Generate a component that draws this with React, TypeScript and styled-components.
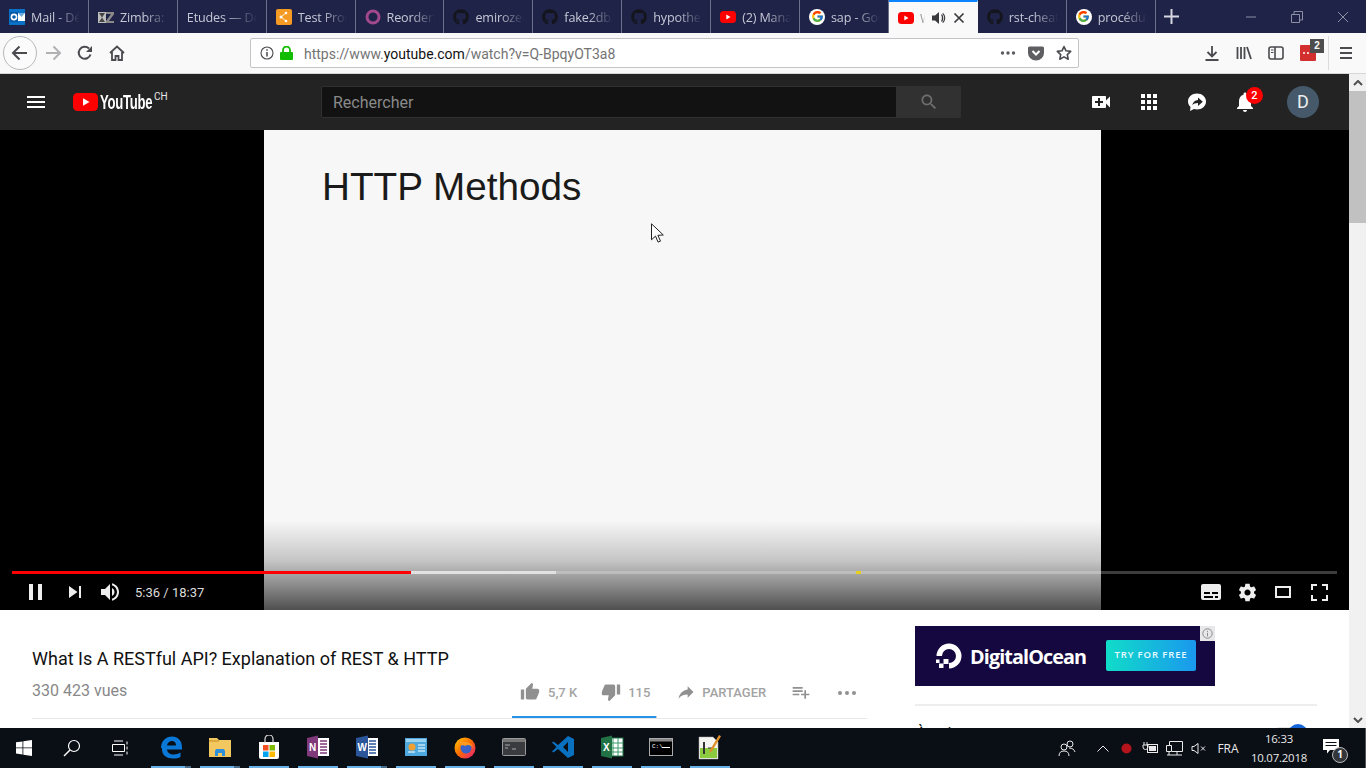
import React from "react";
import styled, { createGlobalStyle } from "styled-components";
import { FaGithub } from "react-icons/fa";
import { FcGoogle } from "react-icons/fc";

const Global = createGlobalStyle`
  html, body { margin: 0; padding: 0; height: 100%; overflow: hidden; background: #fff; }
  * { box-sizing: border-box; }
  body { font-family: Roboto, "Liberation Sans", sans-serif; }
`;

const Shell = styled.div`
  width: 1366px; height: 768px; display: flex; flex-direction: column; overflow: hidden;
`;

/* ---------- generic drawing ---------- */
const Svg = styled.svg<{ $color?: string; $ml?: number }>`
  display: block; flex: none; fill: ${(p) => p.$color || "currentColor"};
  margin-left: ${(p) => p.$ml ?? 0}px;
`;
const Ico = ({ d, size = 24, box = "0 0 24 24", color }: { d: string; size?: number; box?: string; color?: string }) => (
  <Svg width={size} height={size} viewBox={box} $color={color}><path d={d} /></Svg>
);

/* ---------- Firefox tab strip ---------- */
const TabStrip = styled.div`
  height: 33px; background: #1f2347; display: flex; flex: none;
`;
const Tab = styled.div<{ $active?: boolean }>`
  width: 88.9px; height: 33px; flex: none; display: flex; align-items: center; gap: 6px;
  padding: 0 ${(p) => (p.$active ? 12 : 8)}px 0 9px; position: relative; overflow: hidden;
  background: ${(p) => (p.$active ? "#f9f9fa" : "transparent")};
  border-right: 1px solid ${(p) => (p.$active ? "transparent" : "#6d708a")};
  border-top: ${(p) => (p.$active ? "2px solid #0a84ff" : "0")};
`;
const TabLabel = styled.span<{ $active?: boolean }>`
  font: 12.6px "Open Sans", "Liberation Sans", sans-serif; letter-spacing: -.15px; white-space: nowrap; overflow: hidden; flex: 1; min-width: 0;
  padding-top: 1px;
  color: ${(p) => (p.$active ? "#999" : "#c6c8d6")};
  -webkit-mask-image: linear-gradient(90deg, #000 50%, transparent 100%);
  mask-image: linear-gradient(90deg, #000 50%, transparent 100%);
`;
const Favicon = styled.span`
  width: 16px; height: 16px; flex: none; display: block;
`;
const GoogleDisc = styled.span`
  width: 16px; height: 16px; flex: none; border-radius: 50%; background: #fff;
  display: flex; align-items: center; justify-content: center;
`;
const NewTab = styled.div`
  width: 32px; display: flex; align-items: center; justify-content: center; color: #d6d7e0;
`;
const WinButtons = styled.div`
  margin-left: auto; display: flex; color: #8e90a6; height: 33px;
`;
const WinBtn = styled.div`
  width: 46px; display: flex; align-items: center; justify-content: center;
`;

const YtFavicon = () => (
  <Favicon><svg width="16" height="16" viewBox="0 0 16 16"><rect x="0" y="2" width="16" height="12" rx="3.5" fill="#f00" /><path d="M6.3 5.6 10.5 8 6.3 10.4z" fill="#fff" /></svg></Favicon>
);
const HubFavicon = () => (
  <Favicon><FaGithub size={16} color="#14151c" /></Favicon>
);
const GoogleFavicon = () => (
  <GoogleDisc><FcGoogle size={13} /></GoogleDisc>
);

/* ---------- Firefox navigation bar ---------- */
const NavBar = styled.div`
  height: 41px; flex: none; background: #f9f9fa; border-bottom: 1px solid #d7d7db;
  display: flex; align-items: center; color: #4a4a4f; padding-left: 3px;
`;
const BackCircle = styled.div`
  width: 34px; height: 34px; border-radius: 50%; border: 1px solid #b8b8bb; background: #fbfbfc;
  display: flex; align-items: center; justify-content: center; flex: none;
`;
const NavBtn = styled.div<{ $w?: number; $dim?: boolean }>`
  width: ${(p) => p.$w || 32}px; height: 32px; flex: none; display: flex; align-items: center; justify-content: center;
  color: ${(p) => (p.$dim ? "#b1b1b3" : "inherit")}; position: relative;
`;
const UrlBar = styled.div`
  width: 829px; height: 30px; margin-left: 117px; flex: none; background: #fff; border: 1px solid #c4c4c6; border-radius: 2px;
  display: flex; align-items: center; padding-left: 9px;
`;
const UrlText = styled.span`
  font: 14px Roboto, "Liberation Sans", sans-serif; color: #737373; margin: 1px 0 0 11px; white-space: nowrap; flex: 1;
  strong { font-weight: 400; color: #111; }
`;
const UrlIcons = styled.div`
  display: flex; align-items: center; gap: 8px; padding-right: 6px;
`;
const ExtBadge = styled.span`
  position: absolute; top: 2px; right: 0px; width: 14px; height: 14px; background: #4d4d4d; color: #fff;
  font: 700 10px/14px "Liberation Sans", sans-serif; text-align: center;
`;
const ToolGroup = styled.div`
  margin-left: 117px; display: flex; align-items: center;
`;
const ToolDivider = styled.div`
  width: 1px; height: 34px; background: #dcdcde; margin-left: 4px; margin-right: 2px;
`;

/* ---------- page ---------- */
const Viewport = styled.div`
  flex: 1; display: flex; min-height: 0;
`;
const Page = styled.div`
  flex: 1; min-width: 0; display: flex; flex-direction: column; overflow: hidden; background: #fff;
`;
const Scrollbar = styled.div`
  width: 17px; flex: none; background: #f1f1f1; display: flex; flex-direction: column; align-items: center; color: #505050;
`;
const ScrollArrow = styled.div`
  height: 17px; flex: none; display: flex; align-items: center; justify-content: center; width: 100%;
`;
const ScrollThumb = styled.div`
  width: 17px; height: 132px; background: #c1c1c1; flex: none;
`;
const ScrollSpacer = styled.div`
  flex: 1;
`;

/* ---------- YouTube masthead ---------- */
const Masthead = styled.header`
  height: 56px; flex: none; background: #232323; display: flex; align-items: center; color: #fff;
`;
const Burger = styled.div`
  width: 18px; height: 12px; margin-left: 27px; flex: none;
  border-top: 2px solid #fff; border-bottom: 2px solid #fff; position: relative;
  &::after { content: ""; position: absolute; left: 0; right: 0; top: 3px; height: 2px; background: #fff; }
`;
const Logo = styled.div`
  margin-left: 28px; width: 95px; display: flex; align-items: center; flex: none; position: relative;
`;
const LogoWord = styled.span`
  font: 700 20px "Liberation Sans", sans-serif; letter-spacing: -0.4px; margin-left: 2px; color: #fff; width: 52px;
  transform: scaleX(.655); transform-origin: left center; white-space: nowrap; display: block;
`;
const LogoRegion = styled.span`
  position: absolute; left: 81px; top: 0; font: 10px Roboto, sans-serif; color: #e8e8e8;
`;
const Search = styled.div`
  margin-left: 153px; width: 640px; height: 32px; display: flex; flex: none;
`;
const SearchInput = styled.div`
  width: 575px; height: 32px; background: #121212; border: 1px solid #303030; border-right: 0; border-radius: 2px 0 0 2px;
  font: 16px/32px Roboto, sans-serif; color: #8a8a8a; padding-left: 11px;
`;
const SearchBtn = styled.div`
  width: 65px; height: 32px; background: #313131; border: 1px solid #303030; display: flex; align-items: center; justify-content: center; color: #6f6f6f;
`;
const HeadIcons = styled.div`
  margin-left: 128px; display: flex; align-items: center; gap: 24px;
`;
const HeadIcon = styled.div`
  width: 24px; height: 24px; position: relative; flex: none;
`;
const Count = styled.span`
  position: absolute; left: 13px; top: -3px; width: 17px; height: 17px; border-radius: 50%; background: #f00; color: #fff;
  font: 500 11px/17px Roboto, sans-serif; text-align: center;
`;
const Avatar = styled.div`
  width: 32px; height: 32px; border-radius: 50%; background: #45596a; color: #eee; margin-left: 30px; flex: none;
  font: 18px/32px Roboto, sans-serif; text-align: center;
`;

/* ---------- player ---------- */
const Player = styled.section`
  height: 480px; flex: none; background: #000; position: relative; overflow: hidden;
`;
const Slide = styled.div`
  width: 837px; height: 480px; margin-left: 264px; background: #f7f7f7; padding: 32px 0 0 58px;
`;
const SlideTitle = styled.h2`
  margin: 0; font: 400 38.7px/50px "Liberation Sans", sans-serif; color: #1a1a1a;
`;
const Pointer = styled.svg`
  position: absolute; left: 651px; top: 93px;
`;
const Shade = styled.div`
  position: absolute; left: 0; right: 0; bottom: 0; height: 90px;
  background: linear-gradient(180deg, rgba(0,0,0,0) 0%, rgba(0,0,0,.2) 45%, rgba(0,0,0,.68) 100%);
`;
const Timeline = styled.div`
  position: absolute; left: 12px; right: 12px; top: 441px; height: 3px; background: rgba(255,255,255,.24); display: flex;
`;
const Played = styled.div`
  width: 399px; background: #f00;
`;
const Buffered = styled.div`
  width: 145px; background: rgba(255,255,255,.55);
`;
const Marker = styled.div`
  position: absolute; left: 844px; top: 0; width: 5px; height: 3px; background: #e8d020;
`;
const Controls = styled.div`
  position: absolute; left: 17px; right: 12px; top: 444px; height: 36px; display: flex; align-items: center; color: #eee;
`;
const Ctl = styled.div<{ $ml?: number }>`
  width: 36px; height: 36px; flex: none; display: flex; align-items: center; justify-content: center;
  margin-left: ${(p) => p.$ml ?? 0}px;
`;
const TimeText = styled.span`
  font: 13px Roboto, sans-serif; color: #ddd; margin-left: 6px; white-space: nowrap;
`;
const CtlRight = styled.div`
  margin-left: auto; display: flex;
`;

/* ---------- below the player ---------- */
const Below = styled.div`
  flex: 1; display: flex; padding: 16px 0 0 32px; min-height: 0; overflow: hidden;
`;
const Primary = styled.div`
  width: 835px; flex: none; padding-top: 21px;
`;
const VideoTitle = styled.h1`
  margin: 0; font: 400 18px/24px Roboto, sans-serif; color: #111;
`;
const MetaRow = styled.div`
  display: flex; height: 48px; align-items: flex-start; border-bottom: 1px solid #e8e8e8; position: relative;
`;
const Views = styled.span`
  font: 16px/24px Roboto, sans-serif; color: #888; margin-top: 8px; width: 488px; flex: none; white-space: nowrap;
`;
const Actions = styled.div`
  display: flex; align-items: center; color: #909090; height: 24px; margin-top: 9px;
`;
const Act = styled.div<{ $gap?: number; $mr?: number }>`
  display: flex; align-items: center; gap: ${(p) => p.$gap ?? 8}px; font: 500 13px Roboto, sans-serif; color: #a3a3a3;
  margin-right: ${(p) => p.$mr ?? 24}px; white-space: nowrap;
`;
const Sentiment = styled.div`
  position: absolute; left: 480px; bottom: 0; width: 145px; height: 2px; background: #ccc; z-index: 1;
`;
const SentimentFill = styled.div`
  height: 100%; width: 99%; background: #2793e6;
`;
const Secondary = styled.aside`
  width: 402px; flex: none; margin-left: 48px;
`;
const Ad = styled.div`
  width: 300px; height: 60px; background: #150840; display: flex; align-items: center; position: relative; padding-left: 20px;
`;
const AdWord = styled.span`
  font: 700 19.8px "Open Sans", sans-serif; color: #fff; margin-left: 7px; letter-spacing: -.9px; white-space: nowrap;
`;
const AdCta = styled.div`
  position: absolute; left: 191px; top: 14px; width: 90px; height: 31px; border-radius: 2px;
  background: linear-gradient(90deg, #10dcc8, #1a98ee); color: #e8fbff; font: 600 9.5px/30px "Open Sans", sans-serif; letter-spacing: .9px; text-align: center;
`;
const AdInfo = styled.div`
  position: absolute; right: 0; top: 0; width: 15px; height: 15px; background: #e8e8ea; display: flex; align-items: center; justify-content: center; color: #8a8a8a;
`;
const SideDivider = styled.div`
  height: 2px; background: #eee; margin-top: 18px;
`;
const UpNext = styled.div`
  display: flex; justify-content: space-between; align-items: flex-start; margin-top: 17px; height: 24px;
`;
const UpNextLabel = styled.span`
  font: 16px/24px Roboto, sans-serif; color: #111; margin-top: -1px; margin-left: 1px;
`;
const Toggle = styled.div`
  width: 34px; height: 14px; border-radius: 7px; background: #e6e6e6; position: relative; margin: 4px 10px 0 0;
  &::after { content: ""; position: absolute; right: -1px; top: -3px; width: 20px; height: 20px; border-radius: 50%; background: #1565d8; }
`;

/* ---------- Windows taskbar ---------- */
const Taskbar = styled.footer`
  height: 40px; flex: none; background: #0a0e15; display: flex; align-items: center; color: #fff;
`;
const SysBtn = styled.div`
  width: 48px; height: 40px; flex: none; display: flex; align-items: center; justify-content: center;
`;
const Pinned = styled.div`
  display: flex; margin-left: 7px;
`;
const Pin = styled.div<{ $stack?: boolean }>`
  width: 49px; height: 40px; position: relative; display: flex; align-items: center; justify-content: center; padding: 0 9px 2px 0;
  &::after {
    content: ""; position: absolute; left: 0; bottom: 0; width: 40px; height: 2px; background: ${(p) => p.$stack ? "linear-gradient(90deg,#6ab1e8 85%,#4a6d8c 85%)" : "#6ab1e8"};
  }
`;
const Tray = styled.div`
  margin-left: auto; display: flex; align-items: center; height: 40px; color: #eaeaea;
`;
const TrayIcon = styled.div<{ $w: number; $ml?: number }>`
  width: ${(p) => p.$w}px; display: flex; align-items: center; justify-content: center; flex: none;
  margin-left: ${(p) => p.$ml ?? 0}px;
`;
const Lang = styled.span`
  font: 12px "Open Sans", sans-serif; width: 32px; text-align: center; margin: 0 4px 0 2px;
`;
const Clock = styled.div`
  width: 62px; margin-right: 8px; text-align: center; font: 11.4px/19px "Open Sans", sans-serif; letter-spacing: -.2px; color: #e8e8e8; white-space: nowrap;
`;
const Notif = styled.div`
  width: 48px; height: 40px; position: relative; display: flex; align-items: center; justify-content: center;
  border-right: 1px solid #555; padding: 0 22px 4px 0;
`;
const NotifCount = styled.span`
  position: absolute; left: 14px; top: 19px; width: 16px; height: 16px; border-radius: 50%; border: 1.5px solid #bbb; background: #33363b; color: #fff;
  font: 700 10px/13px "Open Sans", sans-serif; text-align: center;
`;

/* ---------- icon paths ---------- */
const P = {
  video: "M17 10.5V7c0-.55-.45-1-1-1H4c-.55 0-1 .45-1 1v10c0 .55.45 1 1 1h12c.55 0 1-.45 1-1v-3.5l4 4v-11l-4 4zM14 13h-3v3H9v-3H6v-2h3V8h2v3h3v2z",
  apps: "M4 8h4V4H4v4zm6 12h4v-4h-4v4zm-6 0h4v-4H4v4zm0-6h4v-4H4v4zm6 0h4v-4h-4v4zm6-10v4h4V4h-4zm-6 4h4V4h-4v4zm6 6h4v-4h-4v4zm0 6h4v-4h-4v4z",
  bell: "M12 22c1.1 0 2-.9 2-2h-4c0 1.1.89 2 2 2zm6-6v-5c0-3.07-1.64-5.64-4.5-6.32V4c0-.83-.67-1.5-1.5-1.5s-1.5.67-1.5 1.5v.68C7.63 5.36 6 7.92 6 11v5l-2 2v1h16v-1l-2-2z",
  search: "M15.5 14h-.79l-.28-.27C15.41 12.59 16 11.11 16 9.5 16 5.91 13.09 3 9.5 3S3 5.91 3 9.5 5.91 16 9.5 16c1.61 0 3.09-.59 4.23-1.57l.27.28v.79l5 4.99L20.49 19l-4.99-5zm-6 0C7.01 14 5 11.99 5 9.5S7.01 5 9.5 5 14 7.01 14 9.5 11.99 14 9.5 14z",
  up: "M1 21h4V9H1v12zm22-11c0-1.1-.9-2-2-2h-6.31l.95-4.57.03-.32c0-.41-.17-.79-.44-1.06L14.17 1 7.59 7.59C7.22 7.95 7 8.45 7 9v10c0 1.1.9 2 2 2h9c.83 0 1.54-.5 1.84-1.22l3.02-7.05c.09-.23.14-.47.14-.73v-2z",
  down: "M15 3H6c-.83 0-1.54.5-1.84 1.22l-3.02 7.05c-.09.23-.14.47-.14.73v2c0 1.1.9 2 2 2h6.31l-.95 4.57-.03.32c0 .41.17.79.44 1.06L9.83 23l6.59-6.59c.36-.36.58-.86.58-1.41V5c0-1.1-.9-2-2-2zm4 0v12h4V3h-4z",
  share: "M14 9V5l7 7-7 7v-4.1c-5 0-8.5 1.6-11 5.1 1-5 4-10 11-11z",
  add: "M14 10H2v2h12v-2zm0-4H2v2h12V6zm4 8v-4h-2v4h-4v2h4v4h2v-4h4v-2h-4zM2 16h8v-2H2v2z",
  gear: "M19.43 12.98c.04-.32.07-.64.07-.98s-.03-.66-.07-.98l2.11-1.65c.19-.15.24-.42.12-.64l-2-3.46c-.12-.22-.39-.3-.61-.22l-2.49 1c-.52-.4-1.08-.73-1.69-.98l-.38-2.65C14.46 2.18 14.25 2 14 2h-4c-.25 0-.46.18-.49.42l-.38 2.65c-.61.25-1.17.59-1.69.98l-2.49-1c-.23-.09-.49 0-.61.22l-2 3.46c-.13.22-.07.49.12.64l2.11 1.65c-.04.32-.07.65-.07.98s.03.66.07.98l-2.11 1.65c-.19.15-.24.42-.12.64l2 3.46c.12.22.39.3.61.22l2.49-1c.52.4 1.08.73 1.69.98l.38 2.65c.03.24.24.42.49.42h4c.25 0 .46-.18.49-.42l.38-2.65c.61-.25 1.17-.59 1.69-.98l2.49 1c.23.09.49 0 .61-.22l2-3.46c.12-.22.07-.49-.12-.64l-2.11-1.65zM12 15.5c-1.93 0-3.5-1.57-3.5-3.5s1.57-3.5 3.5-3.5 3.5 1.57 3.5 3.5-1.57 3.5-3.5 3.5z",
  pause: "M12 26h4V10h-4zM21 26h4V10h-4z",
  next: "M12 24l8.5-6L12 12v12zM22 12v12h2V12h-2z",
  vol: "M8 21h4l5 5V10l-5 5H8v6zM19 14v8c1.48-.68 2.5-2.23 2.5-4 0-1.74-1.02-3.26-2.5-4zM19 11.29c2.89.86 5 3.54 5 6.71s-2.11 5.85-5 6.71v2.06c4.01-.91 7-4.49 7-8.77s-2.99-7.86-7-8.77v2.06z",
};

const tabs = [
  { label: "Mail - Dé", icon: <Favicon><svg width="16" height="16" viewBox="0 0 16 16"><rect width="16" height="16" fill="#0a72c6" /><rect x="9" y="4" width="7" height="8" fill="#fff" /><path d="M9 4h7L12.5 8z" fill="#0a72c6" opacity=".6" /><rect x="1" y="3" width="8" height="10" fill="#0358a7" /><circle cx="5" cy="8" r="2.6" fill="none" stroke="#fff" strokeWidth="1.6" /></svg></Favicon> },
  { label: "Zimbra: S", icon: <Favicon><svg width="16" height="16" viewBox="0 0 16 16"><rect y="3" width="8" height="11" fill="#bdbdbd" /><path d="M1 4h6L4 8.5 7 13H1l3-4.500z" fill="#444" /><path d="M8 3h8v2.200l-5 6.800h5v2H8v-2l5-7H8z" fill="#8a8a8a" /></svg></Favicon> },
  { label: "Etudes — Do", icon: null },
  { label: "Test Proc", icon: <Favicon><svg width="16" height="16" viewBox="0 0 16 16"><rect width="16" height="16" rx="2" fill="#f59b23" /><circle cx="5" cy="8" r="1.500" fill="#fff" /><circle cx="10" cy="4" r="1.300" fill="#fff" /><circle cx="10" cy="12" r="1.300" fill="#fff" /><path d="M5 8l5-4M5 8l5 4" stroke="#fff" strokeWidth=".8" /></svg></Favicon> },
  { label: "Reorderin", icon: <Favicon><svg width="16" height="16" viewBox="0 0 16 16"><circle cx="8" cy="8" r="6" fill="none" stroke="#a2488f" strokeWidth="3" /></svg></Favicon> },
  { label: "emirozer", icon: <HubFavicon /> },
  { label: "fake2db/", icon: <HubFavicon /> },
  { label: "hypothes", icon: <HubFavicon /> },
  { label: "(2) Mana", icon: <YtFavicon /> },
  { label: "sap - Goo", icon: <GoogleFavicon /> },
];
const tabsAfter = [
  { label: "rst-cheat", icon: <HubFavicon /> },
  { label: "procédur", icon: <GoogleFavicon /> },
];

const pins: { icon: React.ReactNode; stack?: boolean }[] = [
  { stack: true, icon: <svg width="24" height="24" viewBox="0 0 24 24"><path d="M2 13C2 6 7 1.500 13 1.500c6 0 10 4 10 11v2H8c.5 3.500 3 5 6.500 5 2.500 0 5-.7 7-2v4.500c-2 1-4.500 1.500-7.500 1.500-6 0-11-3-11-9 0-.5 0-1 0-1.500zM8 10.500h9C17 7.500 15.500 6 13 6s-4.500 1.500-5 4.500z" fill="#0a78d7" /></svg> },
  { stack: true, icon: <svg width="24" height="22" viewBox="0 0 24 22"><path d="M1 2h8l2 2h12v17H1z" fill="#f3c860" /><rect x="1" y="4" width="10" height="2" fill="#d9a93e" /><path d="M7 20v-5l1-2h8l1 2v5h-3v-3h-4v3z" fill="#2e90d8" /></svg> },
  { icon: <svg width="24" height="24" viewBox="0 0 24 24"><path d="M2 7h20v15a2 2 0 0 1-2 2H4a2 2 0 0 1-2-2z" fill="#fff" /><path d="M8 8V4a4 4 0 0 1 8 0v4" fill="none" stroke="#ddd" strokeWidth="1.200" /><rect x="6" y="10" width="5.500" height="5.500" fill="#f25022" /><rect x="12.500" y="10" width="5.500" height="5.500" fill="#7fba00" /><rect x="6" y="16.500" width="5.500" height="5.500" fill="#00a4ef" /><rect x="12.500" y="16.500" width="5.500" height="5.500" fill="#ffb900" /></svg> },
  { icon: <svg width="24" height="24" viewBox="0 0 24 24"><rect x="9" y="3" width="14" height="18" fill="#fff" /><path d="M14 6h7M14 9h7M14 12h7M14 15h7M14 18h7" stroke="#80397b" strokeWidth="1.500" /><path d="M1 3l11-2.500v23L1 21z" fill="#80397b" /><text x="3" y="16" fontFamily="Liberation Sans" fontWeight="700" fontSize="10" fill="#fff">N</text></svg> },
  { stack: true, icon: <svg width="24" height="24" viewBox="0 0 24 24"><rect x="9" y="3" width="14" height="18" fill="#fff" /><path d="M14 6h7M14 9h7M14 12h7M14 15h7M14 18h7" stroke="#2b579a" strokeWidth="1.500" /><path d="M1 3l12-2.500v23L1 21z" fill="#2b579a" /><text x="2.500" y="16" fontFamily="Liberation Sans" fontWeight="700" fontSize="10" fill="#fff">W</text></svg> },
  { icon: <svg width="22" height="20" viewBox="0 0 22 20"><rect x="0" y="1" width="22" height="18" fill="#4ea8de" /><rect x="1" y="2" width="20" height="3" fill="#9ad3f2" /><circle cx="7" cy="10" r="3.500" fill="#f0a030" /><path d="M13 8h7M13 11h7M13 14h7M3 15h7" stroke="#fff" strokeWidth="1.200" /></svg> },
  { icon: <svg width="24" height="24" viewBox="0 0 24 24"><defs><linearGradient id="ffx" x1="0" y1="0" x2="1" y2="1"><stop offset="0" stopColor="#ffcb00" /><stop offset=".5" stopColor="#ff6a00" /><stop offset="1" stopColor="#e31587" /></linearGradient></defs><circle cx="12" cy="13" r="10.500" fill="url(#ffx)" /><circle cx="13" cy="13" r="5.500" fill="#3a62c9" /><path d="M4 4c2 3 5 3 8 3 4 0 7 2 8 6-1-2-3-3-5-3-1 0-2 .3-3 1 0-1-3-1-4-.5 0-3-3-4-4-6.500z" fill="#ff9a1f" /></svg> },
  { icon: <svg width="24" height="18" viewBox="0 0 24 18"><rect x=".5" y=".5" width="23" height="17" rx="1" fill="#3a3b3e" stroke="#9a9a9a" /><rect x="1" y="1" width="22" height="3" fill="#777" /><path d="M3 7h5M3 10h3M10 11h4" stroke="#aaa" strokeWidth="1" /></svg> },
  { icon: <svg width="24" height="24" viewBox="0 0 24 24"><path d="M17 1l6 3v16l-6 3L7 14l-4.500 3.500L1 16.500 5.500 12 1 7.500 2.500 6.500 7 10zM17 7l-5 5 5 5z" fill="#0a70c0" /></svg> },
  { icon: <svg width="24" height="24" viewBox="0 0 24 24"><rect x="9" y="3" width="14" height="18" fill="#fff" stroke="#217346" /><path d="M13 3v18M18 3v18M9 8h14M9 13h14M9 17h14" stroke="#3a9a68" strokeWidth="1" /><path d="M1 3l11-2.500v23L1 21z" fill="#217346" /><text x="3" y="16" fontFamily="Liberation Sans" fontWeight="700" fontSize="10" fill="#fff">X</text></svg> },
  { icon: <svg width="24" height="18" viewBox="0 0 24 18"><rect x=".5" y=".5" width="23" height="17" fill="#000" stroke="#aaa" /><rect x="1" y="1" width="22" height="2.500" fill="#888" /><text x="3" y="10" fontFamily="Liberation Mono" fontSize="6" fill="#fff">C:\</text><rect x="13" y="9" width="8" height="1" fill="#fff" /></svg> },
  { icon: <svg width="24" height="26" viewBox="0 0 24 26"><path d="M1 3h14l5 5v17H1z" fill="#f4f4f0" stroke="#aaa" strokeWidth=".5" /><path d="M2 14h17v10H2z" fill="#8ccb3f" /><rect x="5" y="8" width="2" height="12" fill="#333" /><path d="M10 14h4" stroke="#333" /><path d="M12 16l9-15 2 1.200-9 15-3 1.500z" fill="#e0902a" /></svg> },
];

export default function App() {
  return (
    <Shell>
      <Global />
      <TabStrip>
        {tabs.map((t) => (
          <Tab key={t.label}>
            {t.icon}
            <TabLabel>{t.label}</TabLabel>
          </Tab>
        ))}
        <Tab $active>
          <YtFavicon />
          <TabLabel $active>W</TabLabel>
          <Svg width="16" height="16" viewBox="0 0 16 16" $color="#3a3a3e"><path d="M1 5.500h3L8 2v12L4 10.500H1zM10 5c1.200.8 1.200 5.200 0 6l.8.800c2-1.500 2-6.100 0-7.600zM12 3l-.7.8c2.500 2.200 2.500 6.200 0 8.400l.7.800c3-2.700 3-7.300 0-10z" /></Svg>
          <Svg width="12" height="12" viewBox="0 0 12 12" $color="none"><path d="M1.500 1.500l9 9M10.500 1.500l-9 9" stroke="#3a3a3e" strokeWidth="1.700" /></Svg>
        </Tab>
        {tabsAfter.map((t) => (
          <Tab key={t.label}>
            {t.icon}
            <TabLabel>{t.label}</TabLabel>
          </Tab>
        ))}
        <NewTab>
          <Svg width="15" height="15" viewBox="0 0 15 15" $color="currentColor"><path d="M6.500 0h2v6.500H15v2H8.500V15h-2V8.500H0v-2h6.500z" /></Svg>
        </NewTab>
        <WinButtons>
          <WinBtn><Svg width="12" height="12" viewBox="0 0 12 12" $color="none"><path d="M1 6h10" stroke="currentColor" /></Svg></WinBtn>
          <WinBtn><Svg width="12" height="12" viewBox="0 0 12 12" $color="none"><path d="M.5 3.500h8v8h-8zM3 3.500V.5h8.500V9H8.500" stroke="currentColor" /></Svg></WinBtn>
          <WinBtn><Svg width="12" height="12" viewBox="0 0 12 12" $color="none"><path d="M1 1l10 10M11 1L1 11" stroke="currentColor" /></Svg></WinBtn>
        </WinButtons>
      </TabStrip>

      <NavBar>
        <BackCircle>
          <Svg width="18" height="18" viewBox="0 0 18 18" $color="none"><path d="M16 9H2.500M8.500 2.500 2 9l6.500 6.500" stroke="#4a4a4f" strokeWidth="2" /></Svg>
        </BackCircle>
        <NavBtn $dim $w={31}>
          <Svg width="18" height="18" viewBox="0 0 18 18" $color="none"><path d="M2 9h13.500M9.500 2.500 16 9l-6.500 6.500" stroke="currentColor" strokeWidth="2" /></Svg>
        </NavBtn>
        <NavBtn $w={33}>
          <Svg width="16" height="16" viewBox="0 0 16 16" $color="none"><path d="M13.500 9.500A6 6 0 1 1 12 3.500" stroke="currentColor" strokeWidth="2" /><path d="M15 1v6H9z" fill="currentColor" /></Svg>
        </NavBtn>
        <NavBtn $w={32}>
          <Svg width="16" height="16" viewBox="0 0 16 16" $color="none"><path d="M1 8 8 1.500 15 8M3 7v8h3.500v-4h3v4H13V7" stroke="currentColor" strokeWidth="1.800" /></Svg>
        </NavBtn>
        <UrlBar>
          <Svg width="14" height="14" viewBox="0 0 14 14" $color="none"><circle cx="7" cy="7" r="6" stroke="#4a4a4f" strokeWidth="1.100" /><path d="M7 6v4.500M7 3.300v1.500" stroke="#4a4a4f" strokeWidth="1.500" /></Svg>
          <Svg $ml={6} width="13" height="14" viewBox="0 0 13 14" $color="none"><rect x="0" y="6" width="13" height="8" rx="1" fill="#12bc00" /><path d="M3 6.500V4a3.500 3.500 0 0 1 7 0v2.500" stroke="#12bc00" strokeWidth="1.800" /></Svg>
          <UrlText>https://www.<strong>youtube.com</strong>/watch?v=Q-BpqyOT3a8</UrlText>
          <UrlIcons>
            <Svg width="16" height="16" viewBox="0 0 16 16" $color="#5b5b5f"><circle cx="2.500" cy="8" r="1.700" /><circle cx="8" cy="8" r="1.700" /><circle cx="13.500" cy="8" r="1.700" /></Svg>
            <Svg $ml={4} width="16" height="16" viewBox="0 0 16 16"><path d="M1.500 1.500h13A1.500 1.500 0 0 1 16 3v5A8 7.500 0 0 1 0 8V3a1.500 1.500 0 0 1 1.500-1.500z" fill="#5f5f63" /><path d="M4.500 6 8 9.500 11.500 6" fill="none" stroke="#fff" strokeWidth="2" /></Svg>
            <Svg $ml={4} width="16" height="16" viewBox="0 0 16 16" $color="none"><path d="M8 1.500l2 4.300 4.700.6-3.400 3.200.9 4.600L8 11.900 3.800 14.200l.9-4.600L1.300 6.400 6 5.800z" stroke="#4a4a4f" strokeWidth="1.600" strokeLinejoin="round" /></Svg>
          </UrlIcons>
        </UrlBar>
        <ToolGroup>
          <NavBtn><Svg width="16" height="16" viewBox="0 0 16 16" $color="none"><path d="M8 1v10M3.500 7 8 11.500 12.500 7M1.500 15h13" stroke="currentColor" strokeWidth="1.800" /></Svg></NavBtn>
          <NavBtn><Svg width="16" height="16" viewBox="0 0 16 16" $color="none"><path d="M1.500 2v12M5 2v12M8.500 2v12M11 2l4 12" stroke="currentColor" strokeWidth="1.800" /></Svg></NavBtn>
          <NavBtn><Svg width="16" height="16" viewBox="0 0 16 16" $color="none"><rect x="1" y="2" width="14" height="12" rx="2" stroke="currentColor" strokeWidth="1.600" /><path d="M7 2v12" stroke="currentColor" strokeWidth="1.600" /><path d="M3 5h2.500M3 7.500h2.500" stroke="currentColor" /></Svg></NavBtn>
          <NavBtn>
            <Svg width="16" height="16" viewBox="0 0 16 16"><rect width="16" height="16" rx="1" fill="#d32f2f" /><circle cx="4" cy="8" r="1" fill="#fff" /><circle cx="8" cy="8" r="1" fill="#fff" /></Svg>
            <ExtBadge>2</ExtBadge>
          </NavBtn>
          <ToolDivider />
          <NavBtn $w={30}><Svg width="14" height="14" viewBox="0 0 14 14" $color="none"><path d="M1 2h12M1 7h12M1 12h12" stroke="currentColor" strokeWidth="1.800" /></Svg></NavBtn>
        </ToolGroup>
      </NavBar>

      <Viewport>
        <Page>
          <Masthead>
            <Burger />
            <Logo>
              <Svg width="25" height="18" viewBox="0 0 25 18"><rect width="25" height="18" rx="4.500" fill="#f00" /><path d="M10 5.200 16.500 9 10 12.800z" fill="#fff" /></Svg>
              <LogoWord>YouTube</LogoWord>
              <LogoRegion>CH</LogoRegion>
            </Logo>
            <Search>
              <SearchInput>Rechercher</SearchInput>
              <SearchBtn><Ico d={P.search} size={20} /></SearchBtn>
            </Search>
            <HeadIcons>
              <HeadIcon><Ico d={P.video} /></HeadIcon>
              <HeadIcon><Ico d={P.apps} /></HeadIcon>
              <HeadIcon>
                <Svg width="24" height="24" viewBox="0 0 24 24"><path d="M12 3.500c5 0 9 3.500 9 8s-4 8-9 8c-1 0-2-.2-3-.5L5 21l.5-4C4 15.500 3 13.700 3 11.500c0-4.500 4-8 9-8z" fill="#fff" /><path d="M13 7.500v2.600c-3.200.3-5 2.200-5.800 5.200 1.300-1.500 3.200-2.200 5.800-2.200V16l4.800-4.300z" fill="#232323" /></Svg>
              </HeadIcon>
              <HeadIcon>
                <Ico d={P.bell} />
                <Count>2</Count>
              </HeadIcon>
            </HeadIcons>
            <Avatar>D</Avatar>
          </Masthead>

          <Player>
            <Slide><SlideTitle>HTTP Methods</SlideTitle></Slide>
            <Pointer width="13" height="20" viewBox="0 0 13 20"><path d="M.5.800v16l4-3.700 2.600 6 2.400-1-2.600-5.800 5.400-.300z" fill="#fff" stroke="#222" strokeWidth="1" /></Pointer>
            <Shade />
            <Timeline>
              <Played />
              <Buffered />
              <Marker />
            </Timeline>
            <Controls>
              <Ctl><Ico d={P.pause} size={36} box="0 0 36 36" /></Ctl>
              <Ctl $ml={4}><Ico d={P.next} size={36} box="0 0 36 36" /></Ctl>
              <Ctl><Ico d={P.vol} size={36} box="0 0 36 36" /></Ctl>
              <TimeText>5:36 / 18:37</TimeText>
              <CtlRight>
                <Ctl><Svg width="20" height="16" viewBox="0 0 20 16"><path d="M2 0h16a2 2 0 0 1 2 2v12a2 2 0 0 1-2 2H2a2 2 0 0 1-2-2V2a2 2 0 0 1 2-2zm1 8v2h6V8zm8 0v2h6V8zM3 12v2h9v-2zm11 0v2h3v-2z" fillRule="evenodd" /></Svg></Ctl>
                <Ctl><Ico d={P.gear} size={21} /></Ctl>
                <Ctl><Svg width="16" height="12" viewBox="0 0 16 12" $color="none"><rect x="1" y="1" width="14" height="10" stroke="currentColor" strokeWidth="2" /></Svg></Ctl>
                <Ctl><Svg width="17" height="17" viewBox="0 0 17 17" $color="none"><path d="M1 6V1h5M11 1h5v5M16 11v5h-5M6 16H1v-5" stroke="currentColor" strokeWidth="2" /></Svg></Ctl>
              </CtlRight>
            </Controls>
          </Player>

          <Below>
            <Primary>
              <VideoTitle>What Is A RESTful API? Explanation of REST &amp; HTTP</VideoTitle>
              <MetaRow>
                <Views>330 423 vues</Views>
                <Actions>
                  <Act><Ico d={P.up} size={20} color="#909090" />5,7 K</Act>
                  <Act $gap={7} $mr={26}><Ico d={P.down} size={20} color="#909090" />115</Act>
                  <Act $gap={6} $mr={25}><Ico d={P.share} size={20} color="#909090" />PARTAGER</Act>
                  <Act $mr={26}><Ico d={P.add} size={20} color="#909090" /></Act>
                  <Act><Svg width="20" height="20" viewBox="0 0 20 20" $color="#909090"><circle cx="3" cy="11" r="2" /><circle cx="10" cy="11" r="2" /><circle cx="17" cy="11" r="2" /></Svg></Act>
                </Actions>
                <Sentiment><SentimentFill /></Sentiment>
              </MetaRow>
            </Primary>
            <Secondary>
              <Ad>
                <Svg width="28" height="28" viewBox="0 0 28 28"><path d="M14 26.500V21a7 7 0 1 0-7-7H1.500A12.500 12.500 0 1 1 14 26.500z" fill="#fff" /><rect x="8.500" y="17" width="5" height="5" fill="#fff" /><rect x="4" y="21.500" width="4.500" height="4.500" fill="#fff" /><rect x="1" y="17.500" width="3.500" height="3.500" fill="#fff" /></Svg>
                <AdWord>DigitalOcean</AdWord>
                <AdCta>TRY FOR FREE</AdCta>
                <AdInfo><Svg width="11" height="11" viewBox="0 0 11 11" $color="none"><circle cx="5.500" cy="5.500" r="4.700" stroke="currentColor" /><path d="M5.500 4.800v3.500M5.500 2.700v1.200" stroke="currentColor" /></Svg></AdInfo>
              </Ad>
              <SideDivider />
              <UpNext>
                <UpNextLabel>À suivre</UpNextLabel>
                <Toggle />
              </UpNext>
            </Secondary>
          </Below>
        </Page>
        <Scrollbar>
          <ScrollArrow><Svg width="10" height="6" viewBox="0 0 10 6" $color="none"><path d="M1 5l4-4 4 4" stroke="currentColor" strokeWidth="2" /></Svg></ScrollArrow>
          <ScrollThumb />
          <ScrollSpacer />
          <ScrollArrow><Svg width="10" height="6" viewBox="0 0 10 6" $color="none"><path d="M1 1l4 4 4-4" stroke="currentColor" strokeWidth="2" /></Svg></ScrollArrow>
        </Scrollbar>
      </Viewport>

      <Taskbar>
        <SysBtn><Svg width="16" height="16" viewBox="0 0 16 16" $color="#fff"><path d="M0 2.300 6.500 1.400v6H0zM7.300 1.300 16 0v7.400H7.300zM0 8.200h6.500v6.200L0 13.500zM7.300 8.200H16V16l-8.700-1.200z" /></Svg></SysBtn>
        <SysBtn><Svg width="18" height="18" viewBox="0 0 18 18" $color="none"><circle cx="11" cy="7" r="5.500" stroke="#fff" strokeWidth="1.200" /><path d="M7 11l-6 6" stroke="#fff" strokeWidth="1.400" /></Svg></SysBtn>
        <SysBtn><Svg width="17" height="16" viewBox="0 0 17 16" $color="none"><path d="M.5 4.500h12v7H.5zM2 1h9M2 15h9M15 1.500v3M15 6.500v3M15 11.500v3" stroke="#fff" /></Svg></SysBtn>
        <Pinned>
          {pins.map((p, i) => (
            <Pin key={i} $stack={p.stack}>{p.icon}</Pin>
          ))}
        </Pinned>
        <Tray>
          <TrayIcon $w={32}><Svg width="18" height="17" viewBox="0 0 18 17" $color="none"><circle cx="6" cy="7" r="3" stroke="#eaeaea" /><circle cx="12" cy="4" r="3" stroke="#eaeaea" /><path d="M1 16c0-3.500 2-5 5-5s5 1.500 5 5M11 8c3 0 5.500 1.500 6 4" stroke="#eaeaea" /></Svg></TrayIcon>
          <TrayIcon $w={24} $ml={8}><Svg width="12" height="7" viewBox="0 0 12 7" $color="none"><path d="M.5 6.500 6 1l5.500 5.500" stroke="#eaeaea" /></Svg></TrayIcon>
          <TrayIcon $w={22}><Svg width="11" height="11" viewBox="0 0 11 11"><circle cx="5.500" cy="5.500" r="5" fill="#b5141c" /></Svg></TrayIcon>
          <TrayIcon $w={26}><Svg width="17" height="12" viewBox="0 0 17 12" $color="none"><rect x="5.500" y="2.500" width="10" height="8" stroke="#eaeaea" /><rect x="7" y="4" width="7" height="5" fill="#eaeaea" /><path d="M2 0v3M5 0v3M1 3h5v2a2.500 2.500 0 0 1-5 0z" stroke="#eaeaea" /></Svg></TrayIcon>
          <TrayIcon $w={23}><Svg width="17" height="15" viewBox="0 0 17 15" $color="none"><path d="M3.500 4.500V.5h13v10H6M.5 4.500h5v6h-5zM3 10.500V14M1 14h15M11 10.500V14" stroke="#eaeaea" /></Svg></TrayIcon>
          <TrayIcon $w={24}><Svg width="15" height="11" viewBox="0 0 15 11" $color="none"><path d="M1 3.500h2L7 .5v10l-4-3H1zM10 3.500l4 4M14 3.500l-4 4" stroke="#eaeaea" /></Svg></TrayIcon>
          <Lang>FRA</Lang>
          <Clock>16:33<br />10.07.2018</Clock>
          <Notif>
            <Svg width="16" height="15" viewBox="0 0 16 15" $color="#fff"><path d="M0 0h16v11H7l-3 3.500V11H0zM2.500 3v1h11V3zm0 3v1h11V6z" fillRule="evenodd" /></Svg>
            <NotifCount>1</NotifCount>
          </Notif>
        </Tray>
      </Taskbar>
    </Shell>
  );
}
